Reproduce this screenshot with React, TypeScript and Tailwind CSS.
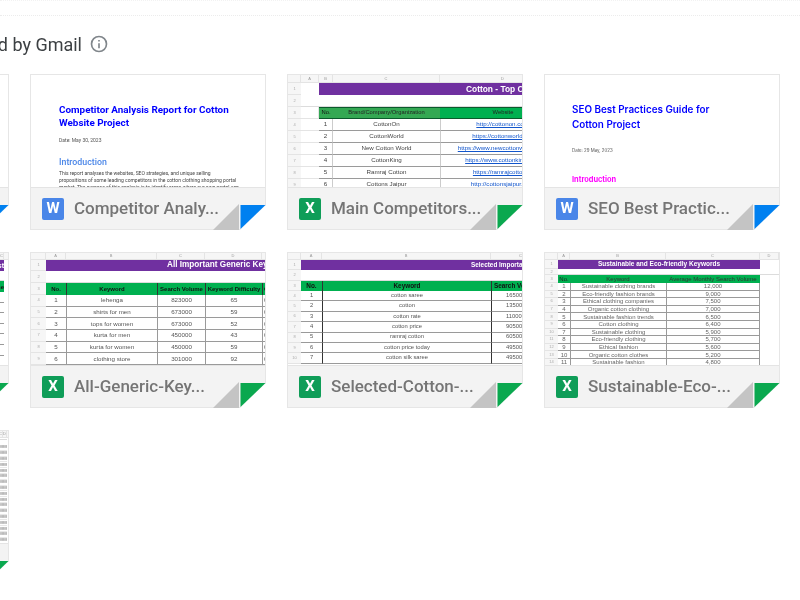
import React from "react";

type SheetProps = {
  cols: string;
  letters: string[];
  letterH?: string;
  rowH: string;
  titleH: string;
  blankH: string;
  headH: string;
  title: string;
  titleClass: string;
  headers: string[];
  headClass: string[];
  rows: string[][];
  cellClass: string[];
  textClass: string;
  hideLabels?: boolean;
};

function Num({ label }: { label?: string }) {
  return (
    <div className="flex items-center justify-center overflow-hidden border-b border-[#e4e4e4] bg-[#f6f6f6] text-center text-[4px] leading-none text-[#aaa]">
      {label}
    </div>
  );
}

function Sheet(p: SheetProps) {
  return (
    <div className="h-full w-full overflow-hidden font-['Liberation_Sans',sans-serif]">
      <div className={`grid ${p.cols} ${p.letterH ?? "h-[7px]"} bg-[#f6f6f6] border-b border-[#e4e4e4]`}>
        <div className="border-r border-[#e4e4e4]" />
        {p.letters.slice(1).map((l, i) => (
          <div key={i} className="flex items-center justify-center border-r border-[#e4e4e4] text-[4px] leading-none text-[#999]">{l}</div>
        ))}
      </div>
      <div className={`grid ${p.cols} ${p.titleH}`}>
        <Num label={p.hideLabels ? "" : "1"} />
        <div className={`whitespace-nowrap overflow-hidden bg-[#7030a0] font-bold leading-none text-white flex items-center ${p.titleClass}`}>{p.title}</div>
      </div>
      <div className={`grid ${p.cols} ${p.blankH}`}>
        <Num label={p.hideLabels ? "" : "2"} />
        <div className="col-span-full col-start-2 border-b border-[#dcdcdc]" />
      </div>
      <div className={`grid ${p.cols} ${p.headH}`}>
        <Num label={p.hideLabels ? "" : "3"} />
        {p.headers.map((h, i) => (
          <div key={i} className={`whitespace-nowrap overflow-hidden flex items-center leading-none ${p.headClass[i] ?? ""}`}>{h}</div>
        ))}
      </div>
      {p.rows.map((r, ri) => (
        <div key={ri} className={`grid ${p.cols} ${p.rowH} ${p.textClass}`}>
          <Num label={String(ri + 4)} />
          {r.map((c, i) => (
            <div key={i} className={`whitespace-nowrap overflow-hidden flex items-center leading-none border-b border-[#9a9a9a] ${p.cellClass[i] ?? ""}`}>{c}</div>
          ))}
        </div>
      ))}
    </div>
  );
}

function Fold({ color }: { color: string }) {
  return (
    <svg className="absolute -right-px -bottom-px" width="53" height="26" viewBox="0 0 53 26">
      <polygon points="53,1 53,26 27,26" fill="#ffffff" />
      <polygon points="26,0 26,26 0,26" fill="#c4c4c4" />
      <polygon points="27.5,1 52.5,1 27.5,25" fill={color} />
    </svg>
  );
}

function Card({ kind, name, children }: { kind: "W" | "X"; name: string; children: React.ReactNode }) {
  return (
    <div className="relative h-[156px] w-[236px] flex flex-col border border-[#e6e6e6] bg-white">
      <div className="h-[112px] overflow-hidden">{children}</div>
      <div className="flex h-[42px] items-center bg-[#f3f3f3] border-t border-[#e4e4e4] pl-[11px]">
        <div className={`flex h-[22px] w-[22px] items-center justify-center rounded-[2px] text-[15px] font-bold text-white font-['Roboto',sans-serif] ${kind === "W" ? "bg-[#4a86e8]" : "bg-[#0f9d58]"}`}>{kind}</div>
        <div className="ml-[10px] whitespace-nowrap font-['Roboto',sans-serif] text-[17px] font-medium text-[#757575]">{name}</div>
      </div>
      <Fold color={kind === "W" ? "#0080f0" : "#0aa84f"} />
    </div>
  );
}

const mid = "justify-center";

function Doc1() {
  return (
    <div className="pl-[28px] pt-[28px] pr-[28px] font-['Roboto',sans-serif]">
      <div className="whitespace-nowrap text-[9.9px] leading-[13px] font-bold text-[#0000ff]">Competitor Analysis Report for Cotton<br />Website Project</div>
      <div className="mt-[8px] text-[5px] leading-[6px] text-[#555]">Date: May 30, 2023</div>
      <div className="mt-[14px] text-[8.8px] leading-[10px] font-medium text-[#4a86e8]">Introduction</div>
      <div className="mt-[3px] text-[5px] leading-[7px] text-[#444] whitespace-nowrap">
        This report analyses the websites, SEO strategies, and unique selling<br />
        propositions of some leading competitors in the cotton clothing shopping portal<br />
        market. The purpose of this analysis is to identify areas where our own portal can
      </div>
    </div>
  );
}

function Doc2() {
  return (
    <div className="pl-[27px] pt-[27px] font-['Inter',sans-serif]">
      <div className="whitespace-nowrap text-[9.9px] leading-[14.5px] font-semibold text-[#0000ff]">SEO Best Practices Guide for<br />Cotton Project</div>
      <div className="mt-[17px] text-[4.4px] leading-[6px] text-[#555]">Date: 29 May, 2023</div>
      <div className="mt-[21px] text-[7.4px] leading-[10px] font-bold text-[#ff00ff]">Introduction</div>
    </div>
  );
}

function Main() {
  return (
    <Sheet
      cols="grid-cols-[13px_18px_14px_107px_126px]"
      letters={["", "A", "B", "C", "D"]}
      letterH="h-[8px]"
      rowH="h-[12px]"
      titleH="h-[12px]"
      blankH="h-[12px]"
      headH="h-[12px]"
      title="Cotton - Top Competitors"
      titleClass="col-start-3 col-span-3 pl-[147px] text-[8.4px]"
      headers={["", "No.", "Brand/Company/Organization", "Website"]}
      headClass={[
        "border-r border-[#e4e4e4] border-b",
        "bg-[#34a853] text-[5.8px] text-[#111] justify-center border-y border-[#0b5a2c]",
        "bg-[#34a853] text-[5.8px] text-[#222] justify-center border-y border-[#0b5a2c]",
        "bg-[#00b050] text-[5.8px] text-[#222] justify-center border-y border-[#0b5a2c]",
      ]}
      rows={[
        ["", "1", "CottonOn", "http://cottonon.com/"],
        ["", "2", "CottonWorld", "https://cottonworld.net/"],
        ["", "3", "New Cotton World", "https://www.newcottonworld.com/"],
        ["", "4", "CottonKing", "https://www.cottonking.com/"],
        ["", "5", "Ramraj Cotton", "https://ramrajcotton.in/"],
        ["", "6", "Cottons Jaipur", "http://cottonsjaipur.com/"],
      ]}
      cellClass={[
        "!border-[#e4e4e4]",
        "justify-center border-r !border-r-[#cccccc]",
        "justify-center",
        "justify-center text-[#1155cc] underline border-l !border-l-[#cccccc]",
      ]}
      textClass="text-[6.2px] text-[#444]"
    />
  );
}

function Generic() {
  return (
    <Sheet
      cols="grid-cols-[15px_20px_91px_48px_57px_40px]"
      letters={["", "A", "B", "C", "D", "E"]}
      rowH="h-[11.7px]"
      titleH="h-[11px]"
      blankH="h-[12px]"
      headH="h-[12px]"
      title="All Important Generic Keywords"
      titleClass="col-span-5 pl-[121px] text-[8.2px]"
      headers={["No.", "Keyword", "Search Volume", "Keyword Difficulty", "CPC"]}
      headClass={[
        "bg-[#00b050] font-bold text-[6px] text-[#111] justify-center",
        "bg-[#00b050] font-bold text-[6px] text-[#111] justify-center border-l border-[#333]",
        "bg-[#00b050] font-bold text-[6px] text-[#111] justify-center border-l border-[#333]",
        "bg-[#00b050] font-bold text-[6px] text-[#111] justify-center border-l border-[#333]",
        "bg-[#00b050] font-bold text-[6px] text-[#111] border-l border-[#333] pl-[1px]",
      ]}
      rows={[
        ["1", "lehenga", "823000", "65", "0.31"],
        ["2", "shirts for men", "673000", "59", "0.42"],
        ["3", "tops for women", "673000", "52", "0.38"],
        ["4", "kurta for men", "450000", "43", "0.27"],
        ["5", "kurta for women", "450000", "59", "0.33"],
        ["6", "clothing store", "301000", "92", "0.51"],
      ]}
      cellClass={[
        mid,
        "justify-center border-l",
        "justify-center border-l",
        "justify-center border-l",
        "border-l pl-[1px]",
      ]}
      textClass="text-[6.2px] text-[#555]"
    />
  );
}

function Selected() {
  return (
    <Sheet
      cols="grid-cols-[13px_21px_169px_60px]"
      letters={["", "A", "B", "C"]}
      rowH="h-[10.4px]"
      titleH="h-[10px]"
      blankH="h-[11px]"
      headH="h-[10px]"
      title="Selected Important Cotton Keywords"
      titleClass="col-span-3 pl-[170px] text-[6.4px]"
      headers={["No.", "Keyword", "Search Volume"]}
      headClass={[
        "bg-[#00b050] font-bold text-[6.4px] text-[#111] justify-center",
        "bg-[#00b050] font-bold text-[6.4px] text-[#111] justify-center border-l border-[#333]",
        "bg-[#00b050] font-bold text-[6.4px] text-[#111] pl-[2px] border-l border-[#333]",
      ]}
      rows={[
        ["1", "cotton saree", "165000"],
        ["2", "cotton", "135000"],
        ["3", "cotton rate", "110000"],
        ["4", "cotton price", "90500"],
        ["5", "ramraj cotton", "60500"],
        ["6", "cotton price today", "49500"],
        ["7", "cotton silk saree", "49500"],
      ]}
      cellClass={[mid, "justify-center border-l !border-l-[#333]", "pl-[14px] border-l !border-l-[#333]"]}
      textClass="text-[5.8px] text-[#555]"
    />
  );
}

function Sustainable() {
  return (
    <Sheet
      cols="grid-cols-[13px_12px_96px_94px_19px]"
      letters={["", "A", "B", "C", "D"]}
      rowH="h-[7.6px]"
      titleH="h-[9px]"
      blankH="h-[6px]"
      headH="h-[8px]"
      title="Sustainable and Eco-friendly Keywords"
      titleClass="col-span-3 justify-center text-[6.5px]"
      headers={["No.", "Keyword", "Average Monthly Search Volume", ""]}
      headClass={[
        "bg-[#00b050] text-[6px] text-[#222] justify-center",
        "bg-[#00b050] text-[6px] text-[#333] justify-center",
        "bg-[#00b050] text-[6px] text-[#333] justify-center",
        "",
      ]}
      rows={[
        ["1", "Sustainable clothing brands", "12,000", ""],
        ["2", "Eco-friendly fashion brands", "9,000", ""],
        ["3", "Ethical clothing companies", "7,500", ""],
        ["4", "Organic cotton clothing", "7,000", ""],
        ["5", "Sustainable fashion trends", "6,500", ""],
        ["6", "Cotton clothing", "6,400", ""],
        ["7", "Sustainable clothing", "5,900", ""],
        ["8", "Eco-friendly clothing", "5,700", ""],
        ["9", "Ethical fashion", "5,600", ""],
        ["10", "Organic cotton clothes", "5,200", ""],
        ["11", "Sustainable fashion", "4,800", ""],
      ]}
      cellClass={[mid, "justify-center border-l", "justify-center border-x", "!border-transparent"]}
      textClass="text-[6px] text-[#666]"
    />
  );
}

function Partial() {
  return (
    <Sheet
      cols="grid-cols-[15px_150px_61px_4px]"
      letters={["", "A", "B", "C"]}
      rowH="h-[10.6px]"
      titleH="h-[11px]"
      blankH="h-[10px]"
      headH="h-[11px]"
      title="Shortlisted Keywords List"
      titleClass="col-span-3 justify-end text-[7px]"
      headers={["No.", "Keyword", "Volume"]}
      headClass={[
        "bg-[#00b050] text-[6px] justify-center",
        "bg-[#00b050] text-[6px] justify-center",
        "bg-[#00b050] text-[6px] justify-end font-bold text-[#111]",
      ]}
      rows={[["1", "", ""], ["2", "", ""], ["3", "", ""], ["4", "", ""], ["5", "", ""], ["6", "", ""]]}
      cellClass={[mid, mid, mid]}
      textClass="text-[6px] text-[#444]"
    />
  );
}

function Dense() {
  const rows = Array.from({ length: 17 }, (_, i) => [String(i + 1), "", "88", "88"]);
  return (
    <Sheet
      cols="grid-cols-[13px_20px_192px_4px_4px]"
      letters={["", "A", "B", "C", "D"]}
      rowH="h-[5.8px]"
      titleH="h-[1px]"
      blankH="h-[1px]"
      headH="h-[5px]"
      title=""
      titleClass="col-span-4 !bg-white"
      headers={["", "", "", ""]}
      headClass={["", "", "", ""]}
      rows={rows}
      cellClass={[mid, "!border-[#e8e8e8]", "justify-center !border-[#e8e8e8]", "justify-center !border-[#e8e8e8]"]}
      textClass="text-[4px] text-[#777]"
      hideLabels
    />
  );
}

export default function App() {
  return (
    <div className="h-[600px] w-[800px] overflow-hidden bg-white font-['Roboto',sans-serif] blur-[0.5px]">
      <div className="h-[16px] border-t border-[#f2f2f2] border-b border-b-[#ececec] border-dotted" />
      <div className="flex h-[58px] w-[108px] justify-end pt-[17px]">
        <div className="flex h-[22px] items-center gap-[8px] whitespace-nowrap shrink-0">
          <span className="text-[18px] text-[#3c4043]">Suggested by Gmail</span>
          <svg width="18" height="18" viewBox="0 0 24 24" fill="none" stroke="#80868b" strokeWidth="2.2">
            <circle cx="12" cy="12" r="10" />
            <line x1="12" y1="11" x2="12" y2="17.5" />
            <line x1="12" y1="6.5" x2="12" y2="8.8" />
          </svg>
        </div>
      </div>
      <div className="ml-[-227px] grid grid-cols-[repeat(4,236px)] gap-x-[21px] gap-y-[22px]">
        <Card kind="W" name="Keyword Research..."><Doc1 /></Card>
        <Card kind="W" name="Competitor Analy..."><Doc1 /></Card>
        <Card kind="X" name="Main Competitors..."><Main /></Card>
        <Card kind="W" name="SEO Best Practic..."><Doc2 /></Card>
        <Card kind="X" name="Shortlisted-Key..."><Partial /></Card>
        <Card kind="X" name="All-Generic-Key..."><Generic /></Card>
        <Card kind="X" name="Selected-Cotton-..."><Selected /></Card>
        <Card kind="X" name="Sustainable-Eco-..."><Sustainable /></Card>
        <Card kind="X" name="Keyword-Data-..."><Dense /></Card>
      </div>
    </div>
  );
}
